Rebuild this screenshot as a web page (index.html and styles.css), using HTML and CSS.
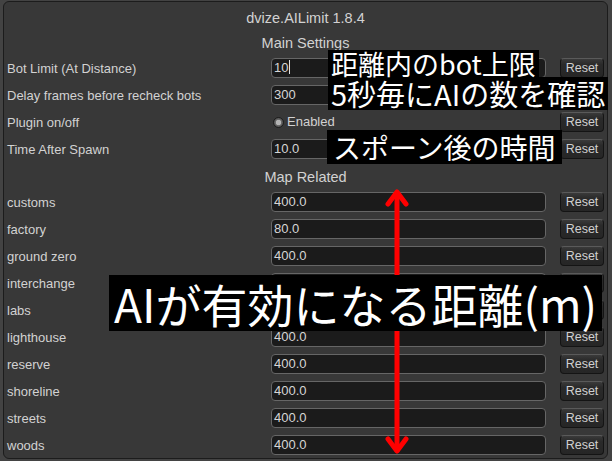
FILE: index.html
```html
<!DOCTYPE html>
<html lang="en">
<head>
    <meta charset="UTF-8">
    <meta name="viewport" content="width=device-width, initial-scale=1.0">
    <title>dvize.AILimit 1.8.4</title>
    <link rel="stylesheet" href="styles.css">
</head>
<body>
    <div class="window">
        <div class="title">dvize.AILimit 1.8.4</div>

        <div class="section-head first">Main Settings</div>
        <div class="row">
            <span class="label">Bot Limit (At Distance)</span>
            <div class="field">10<span class="caret"></span></div>
            <button class="reset">Reset</button>
        </div>
        <div class="row">
            <span class="label">Delay frames before recheck bots</span>
            <div class="field">300</div>
            <button class="reset">Reset</button>
        </div>
        <div class="row">
            <span class="label">Plugin on/off</span>
            <div class="toggle"><span class="radio"></span>Enabled</div>
            <button class="reset">Reset</button>
        </div>
        <div class="row">
            <span class="label">Time After Spawn</span>
            <div class="field">10.0</div>
            <button class="reset">Reset</button>
        </div>

        <div class="section-head">Map Related</div>
        <div class="row">
            <span class="label">customs</span>
            <div class="field">400.0</div>
            <button class="reset">Reset</button>
        </div>
        <div class="row">
            <span class="label">factory</span>
            <div class="field">80.0</div>
            <button class="reset">Reset</button>
        </div>
        <div class="row">
            <span class="label">ground zero</span>
            <div class="field">400.0</div>
            <button class="reset">Reset</button>
        </div>
        <div class="row">
            <span class="label">interchange</span>
            <div class="field">400.0</div>
            <button class="reset">Reset</button>
        </div>
        <div class="row">
            <span class="label">labs</span>
            <div class="field">400.0</div>
            <button class="reset">Reset</button>
        </div>
        <div class="row">
            <span class="label">lighthouse</span>
            <div class="field">400.0</div>
            <button class="reset">Reset</button>
        </div>
        <div class="row">
            <span class="label">reserve</span>
            <div class="field">400.0</div>
            <button class="reset">Reset</button>
        </div>
        <div class="row">
            <span class="label">shoreline</span>
            <div class="field">400.0</div>
            <button class="reset">Reset</button>
        </div>
        <div class="row">
            <span class="label">streets</span>
            <div class="field">400.0</div>
            <button class="reset">Reset</button>
        </div>
        <div class="row">
            <span class="label">woods</span>
            <div class="field">400.0</div>
            <button class="reset">Reset</button>
        </div>
    </div>

    <!-- annotations drawn over the screenshot -->
    <svg class="arrow" viewBox="0 0 612 461" width="612" height="461">
        <g stroke="#ff0000" stroke-width="5" fill="none" stroke-linecap="round" stroke-linejoin="round">
            <line x1="397" y1="193" x2="397" y2="450"/>
            <polyline points="388,204 397,192 406,204"/>
            <polyline points="388,439 397,451 406,439"/>
        </g>
    </svg>

    <div class="note note-limit">
        <div class="note-a">距離内のbot上限</div>
        <div class="note-b">5秒毎にAIの数を確認</div>
    </div>
    <div class="note note-spawn">スポーン後の時間</div>
    <div class="note note-range">AIが有効になる距離(m)</div>
</body>
</html>
```

FILE: styles.css
```css
* {
    margin: 0;
    padding: 0;
    box-sizing: border-box;
}

body {
    position: relative;
    width: 612px;
    height: 461px;
    overflow: hidden;
    background-color: #434343;
    font-family: 'Liberation Sans', Arial, sans-serif;
    color: #d2d2d2;
}

.window {
    margin: 1px 4px 0 3px;
    height: 458px;
    padding: 0 3px;
    background-color: #383838;
    border: 1px solid #1c1c1c;
    border-radius: 6px;
    display: flex;
    flex-direction: column;
}

.title {
    margin-top: 6px;
    height: 20px;
    line-height: 20px;
    font-size: 14.5px;
    text-align: center;
}

.section-head {
    margin-top: 8px;
    margin-bottom: -2px;
    height: 20px;
    line-height: 20px;
    font-size: 14.5px;
    text-align: center;
}

.section-head.first {
    margin-top: 5px;
}

.row {
    display: flex;
    align-items: center;
    height: 20px;
    margin-top: 7px;
    font-size: 13px;
}

.label {
    flex: 0 0 264px;
    padding-top: 1px;
    line-height: 20px;
    white-space: nowrap;
}

.field {
    width: 275px;
    height: 20px;
    margin-right: 14px;
    line-height: 18px;
    padding-left: 2px;
    background-color: #1b1b1b;
    border: 1px solid #666;
    border-radius: 4px;
    color: #d6d6d6;
}

.caret {
    display: inline-block;
    width: 1px;
    height: 14px;
    margin-left: 1px;
    vertical-align: -2px;
    background-color: #e0e0e0;
}

.toggle {
    width: 275px;
    margin-right: 14px;
    display: flex;
    align-items: center;
    gap: 3px;
    padding-left: 2px;
    line-height: 20px;
}

.radio {
    width: 11px;
    height: 11px;
    border-radius: 50%;
    background: radial-gradient(circle, #b4b4b4 0 2.5px, #6a6a6a 3px, #4a4a4a 5px);
    border: 1px solid #1e1e1e;
}

.reset {
    width: 44px;
    height: 20px;
    font-family: inherit;
    font-size: 12.5px;
    color: #d0d0d0;
    background: linear-gradient(#3a3a3a, #2a2a2a 30%, #262626);
    border: 1px solid #141414;
    border-top-color: #5a5a5a;
    border-radius: 4px;
    line-height: 18px;
}

/* annotations */
.arrow {
    position: absolute;
    left: 0;
    top: 0;
}

.note {
    position: absolute;
    font-family: 'Noto Sans CJK JP', sans-serif;
    color: #fff;
    white-space: nowrap;
}

.note-a,
.note-b,
.note-spawn,
.note-range {
    background-color: #000;
}

.note-limit {
    left: 328px;
    top: 50px;
}

.note-a {
    width: fit-content;
    height: 27px;
    line-height: 27px;
    padding: 0 3px;
    font-size: 27px;
}

.note-b {
    height: 33px;
    line-height: 33px;
    padding: 0 3px;
    font-size: 29px;
}

.note-spawn {
    left: 327px;
    top: 130px;
    height: 34px;
    line-height: 34px;
    padding: 0 6px;
    font-size: 28px;
}

.note-range {
    left: 109px;
    top: 275px;
    height: 56px;
    line-height: 56px;
    padding: 0 5px;
    font-size: 46px;
}
```
